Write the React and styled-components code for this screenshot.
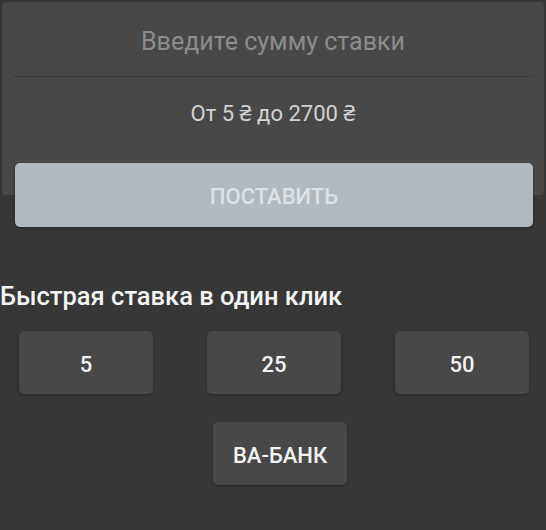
import styled, { createGlobalStyle } from "styled-components";

const GlobalStyle = createGlobalStyle`
    html, body {
        margin: 0;
        padding: 0;
        background: #373737;
    }
    body {
        font-family: Roboto, "Noto Sans", "Liberation Sans", sans-serif;
        width: 546px;
        height: 530px;
        overflow: hidden;
    }
`;

const quickBets = [5, 25, 50];

const App = () => {
    return (
        <Page>
            <GlobalStyle />
            <BetCard>
                <AmountInput placeholder="Введите сумму ставки" />
                <Divider />
                <RangeText>От 5 ₴ до 2700 ₴</RangeText>
            </BetCard>
            <SubmitButton disabled>ПОСТАВИТЬ</SubmitButton>
            <QuickTitle>Быстрая ставка в один клик</QuickTitle>
            <QuickRow>
                {quickBets.map(v => (
                    <QuickButton key={v}>{v}</QuickButton>
                ))}
            </QuickRow>
            <AllInRow>
                <QuickButton>ВА-БАНК</QuickButton>
            </AllInRow>
        </Page>
    );
};

const Page = styled.div`
    display: flex;
    flex-direction: column;
    padding-top: 2px;
`;

const BetCard = styled.div`
    display: flex;
    flex-direction: column;
    margin: 0 2px;
    height: 193px;
    background: #484848;
    border-radius: 4px;
`;

const AmountInput = styled.input`
    height: 74px;
    border: none;
    outline: none;
    background: transparent;
    text-align: center;
    font-family: inherit;
    font-size: 25px;
    color: #e0e0e0;
    padding: 4px 0 0;
    box-sizing: border-box;
    &::placeholder {
        color: #8c8c8c;
    }
`;

const Divider = styled.div`
    height: 1px;
    margin: 0 10px;
    background: #3c3c3c;
`;

const RangeText = styled.div`
    margin-top: 20px;
    text-align: center;
    font-size: 22px;
    color: #d2d2d2;
`;

const SubmitButton = styled.button`
    margin: -32px 13px 0 15px;
    height: 64px;
    padding-top: 3px;
    border: none;
    border-radius: 5px;
    background: #b1b9c0;
    color: #dde2e6;
    font-family: inherit;
    font-size: 22px;
    font-weight: 500;
    box-shadow: 0 1px 3px rgba(0, 0, 0, 0.4);
    cursor: pointer;
`;

const QuickTitle = styled.h3`
    margin: 55px 0 0;
    font-size: 25.5px;
    font-weight: 500;
    color: #f4f4f4;
    line-height: 28px;
`;

const QuickRow = styled.div`
    display: grid;
    grid-template-columns: repeat(3, 134px);
    column-gap: 54px;
    padding-left: 19px;
    margin-top: 21px;
`;

const AllInRow = styled.div`
    display: flex;
    justify-content: center;
    padding-left: 14px;
    margin-top: 28px;
`;

const QuickButton = styled.button`
    width: 134px;
    height: 63px;
    padding-top: 4px;
    border: none;
    border-radius: 5px;
    background: #484848;
    color: #f2f2f2;
    font-family: inherit;
    font-size: 22px;
    font-weight: 500;
    box-shadow: 0 1px 3px rgba(0, 0, 0, 0.35);
    cursor: pointer;
`;

export default App;
